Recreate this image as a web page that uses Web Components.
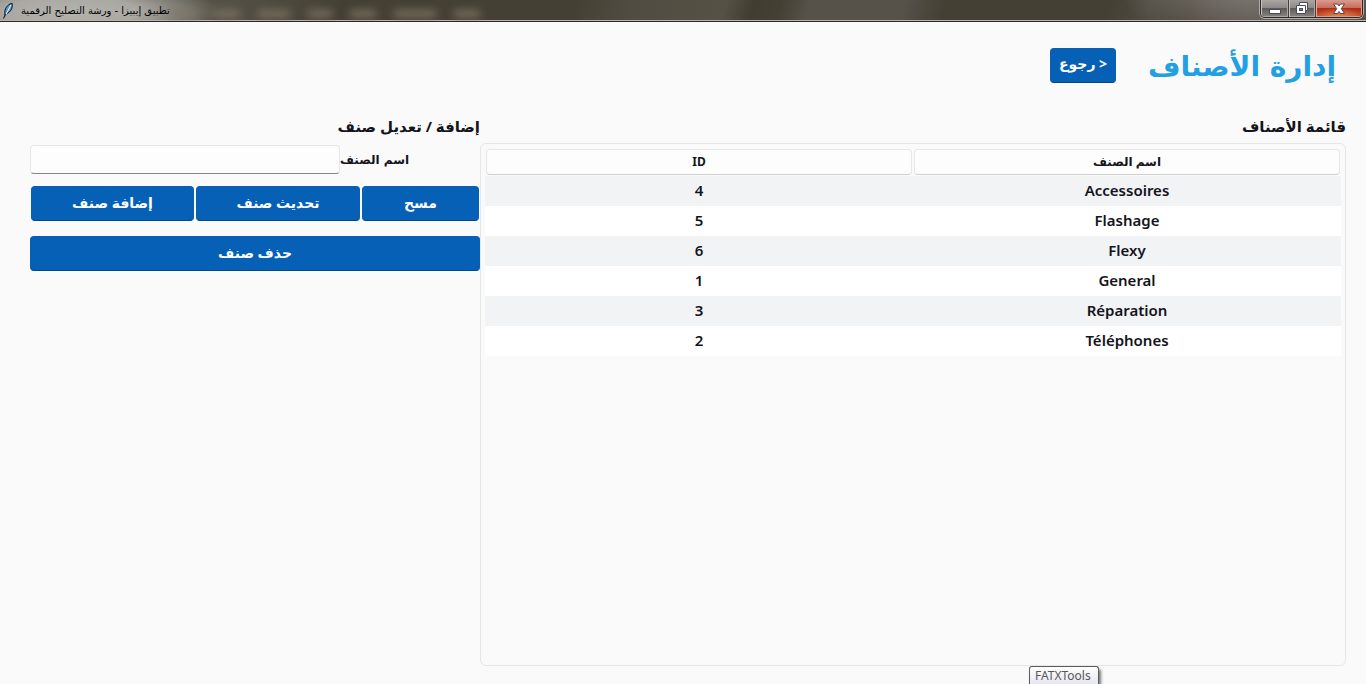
<!DOCTYPE html>
<html lang="ar">
<head>
<meta charset="utf-8">
<title>تطبيق إيبيزا - ورشة التصليح الرقمية</title>
<style>
  html, body { margin: 0; height: 100%; }
  body { background: #fafafa; color: #14141c; font-family: "Noto Sans", "DejaVu Sans", sans-serif; overflow: hidden; }
</style>
</head>
<body>
<app-window></app-window>
<script>
const define = (name, html, setup) => customElements.define(name, class extends HTMLElement {
  constructor() {
    super();
    const t = document.createElement('template');
    t.innerHTML = html;
    this.attachShadow({ mode: 'open' }).append(t.content.cloneNode(true));
  }
  connectedCallback() { if (setup) setup(this, this.shadowRoot); }
});

define('title-bar', `
<style>
  :host { display: flex; align-items: flex-start; height: 21px; position: relative; overflow: hidden;
    border-bottom: 1px solid #2b2828; box-shadow: inset 0 -1px #b9b3ac;
    background:
      radial-gradient(ellipse 150px 34px at 70px 12px, #b4b2ad 0, #aaa8a2 45%, transparent 100%),
      radial-gradient(ellipse 130px 60px at 1250px -12px, #827c78, transparent),
      linear-gradient(105deg, #6b6860 0, #524e43 18%, #454034 25%, #454034 42%, #504c41 46%, #565145 53%, #423d31 55%, #454034 57%, #565149 59%, #565149 66%, #454034 69%, #454034 81%, #504b41 84%, #484338 87%, #56514a 100%); }
  .blur { position: absolute; left: 170px; top: 10px; width: 312px; height: 8px; filter: blur(4px); opacity: .8;
    background: linear-gradient(90deg, #807868 0 26px, transparent 26px 44px, #807868 44px 70px, transparent 70px 88px, #807868 88px 120px, transparent 120px 138px, #807868 138px 162px, transparent 162px 180px, #807868 180px 206px, transparent 206px 224px, #807868 224px 266px, transparent 266px 284px, #807868 284px 310px, transparent 310px); }
  .icon { margin: 3px 0 0 2px; width: 12px; height: 16px; flex: none; position: relative; }
  .name { flex: 1; margin-left: 7px; position: relative; font: 10px/22px "DejaVu Sans", sans-serif; color: #000; white-space: nowrap; }
  .controls { display: flex; position: relative; margin-right: 3px; height: 17px; border: 1px solid #2a2726; border-top: 0; border-radius: 0 0 5px 5px; box-shadow: 0 0 0 1px #b3aea9; overflow: hidden; }
  button { all: unset; box-sizing: border-box; display: flex; align-items: center; justify-content: center; height: 17px; width: 28px; border-right: 1px solid #403e3c;
    box-shadow: inset 1px 0 #c9c5c1, inset -1px -1px #aaa6a1; background: linear-gradient(#a9a6a3 0, #8b8886 48%, #5f5b58 50%, #88847f 100%); }
  button:nth-child(2) { width: 27px; }
  .close { width: 46px; border: 0; background: radial-gradient(ellipse 26px 9px at 50% 100%, #e58a50, transparent), linear-gradient(#d99c8e 0, #c86a57 48%, #b02d16 50%, #c14a2a 100%); box-shadow: inset 1px 0 #e8aa9d, inset -1px -1px #dd9a89; }
</style>
<div class="blur"></div>
<svg class="icon" viewBox="0 0 12 16"><path d="M2 15 3 11C2 6 5 2 10 0c1 5-1 9-6 11z" fill="#4f9ad6" stroke="#111" stroke-width="1"/><path d="M2 15 9 2" stroke="#fff"/><path d="M1.500 15.500 4 11" stroke="#111"/></svg>
<div class="name" dir="ltr"><bdi dir="rtl">تطبيق إيبيزا - ورشة التصليح الرقمية</bdi></div>
<div class="controls">
  <button aria-label="تصغير"><svg width="14" height="14"><rect x="1.500" y="7.500" width="11" height="4" fill="#fff" stroke="#4b4b5c"/></svg></button>
  <button aria-label="استعادة"><svg width="14" height="14"><path fill="#fff" stroke="#4b4b5c" d="M4.500.5h8v8h-2v3h-9v-8h3z"/><path d="M4.500 3.500h6v5" fill="none" stroke="#4b4b5c"/><rect x="4.500" y="6.500" width="3" height="2" fill="#888" stroke="#4b4b5c"/></svg></button>
  <button class="close" aria-label="إغلاق"><svg width="14" height="14"><path d="M1.500 2h4L7 4l1.500-2h4L9.300 6.700l3.200 4.800h-4L7 9.500l-1.500 2h-4l3.200-4.800z" fill="#fff" stroke="#58454d"/></svg></button>
</div>`);

define('action-button', `
<style>
  :host { display: block; }
  button { box-sizing: border-box; display: block; width: 100%; height: 35px; padding: 0 0 2px; border: 1px solid #0560b6; border-bottom-color: #034783; border-radius: 4px; background: #0560b6; color: #fff; font: bold 14px/20px "Noto Sans", "DejaVu Sans", sans-serif; white-space: nowrap; cursor: pointer; }
</style>
<button type="button"><slot></slot></button>`);

define('page-header', `
<style>
  :host { display: flex; align-items: center; gap: 32px; padding: 0 30px; height: 86px; }
  h1 { margin: 3px 0 0; color: #22a0e2; font: bold 28px/40px "DejaVu Sans", sans-serif; }
  action-button { width: 66px; }
</style>
<h1>إدارة الأصناف</h1>
<action-button>&lt; رجوع</action-button>`);

define('category-form', `
<style>
  :host { display: block; }
  h2 { margin: 0 0 9px; font: bold 15px/20px "Noto Sans", "DejaVu Sans", sans-serif; }
  .field { display: grid; grid-template-columns: 140px 1fr; align-items: center; }
  label { font: bold 12px/20px "DejaVu Sans", sans-serif; text-align: left; white-space: nowrap; }
  input { box-sizing: border-box; width: 100%; height: 29px; padding: 0 8px; border: 1px solid #e7e7e7; border-bottom-color: #868686; border-radius: 4px; background: #fdfdfd; font: 14px "Noto Sans", sans-serif; }
  .row { display: grid; grid-template-columns: 117fr 164fr 163fr; gap: 2px; margin: 12px 1px 15px; }
</style>
<h2>إضافة / تعديل صنف</h2>
<div class="field"><label for="name">اسم الصنف</label><input id="name" type="text"></div>
<div class="row"><action-button>مسح</action-button><action-button>تحديث صنف</action-button><action-button>إضافة صنف</action-button></div>
<action-button>حذف صنف</action-button>`);

define('category-table', `
<style>
  :host { display: flex; flex-direction: column; }
  h2 { margin: 0 0 7px; font: bold 15px/20px "Noto Sans", "DejaVu Sans", sans-serif; }
  .frame { flex: 1; border: 1px solid #e6e6e6; border-radius: 6px; padding: 4px; }
  table { width: 100%; border-collapse: collapse; table-layout: fixed; }
  th { padding: 1px 1px 0; height: 27px; vertical-align: top; }
  th span { display: block; box-sizing: border-box; height: 26px; border: 1px solid #e7e7e7; border-bottom-color: #cfcfcf; border-radius: 4px; background: #fdfdfd; font: bold 12px/24px "Noto Sans", "DejaVu Sans", sans-serif; }
  td { padding: 0 0 2px; height: 28px; text-align: center; font: 600 15px/28px "Noto Sans", sans-serif; background: #fff; }
  tr:nth-child(odd) td { background: #f2f3f5; }
</style>
<h2>قائمة الأصناف</h2>
<div class="frame"><table><thead><tr><th scope="col"><span>اسم الصنف</span></th><th scope="col"><span>ID</span></th></tr></thead><tbody></tbody></table></div>`,
(el, root) => {
  const body = root.querySelector('tbody');
  for (const values of [['Accessoires', 4], ['Flashage', 5], ['Flexy', 6], ['General', 1], ['Réparation', 3], ['Téléphones', 2]]) {
    const row = body.insertRow();
    for (const v of values) row.insertCell().textContent = v;
  }
});

define('task-tooltip', `
<style>
  :host { position: absolute; left: 1029px; bottom: 0; box-sizing: border-box; height: 18px; padding: 0 7px 0 5px; border: 1px solid #5c5c5c; border-bottom: 0; border-radius: 3px 3px 0 0; background: linear-gradient(#fff, #e6e6f1); box-shadow: 2px 3px 3px #777; color: #575757; font: 12px/18px "Noto Sans", sans-serif; }
</style><slot></slot>`);

define('app-window', `
<style>
  :host { display: flex; flex-direction: column; height: 100vh; position: relative; overflow: hidden; }
  title-bar { flex: none; }
  main { flex: 1; display: flex; flex-direction: column; padding-bottom: 18px; }
  .columns { flex: 1; display: grid; grid-template-columns: 1fr 450px; padding: 8px 20px 0 30px; }
</style>
<title-bar></title-bar>
<main dir="rtl">
  <page-header></page-header>
  <div class="columns"><category-table></category-table><category-form></category-form></div>
</main>
<task-tooltip>FATXTools</task-tooltip>`);
</script>
</body>
</html>
